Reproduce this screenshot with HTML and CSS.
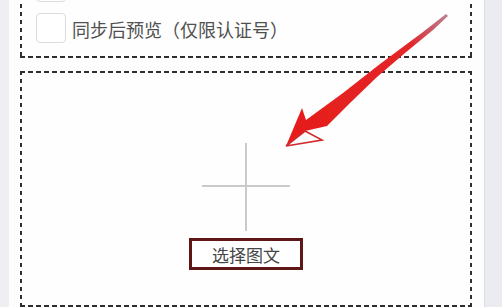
FILE: index.html
```html
<!DOCTYPE html>
<html lang="zh">
<head>
<meta charset="utf-8">
<link rel="stylesheet" href="styles.css">
</head>
<body>
<div class="page">
  <div class="card">
    <div class="box box-top">
      <div class="row"><span class="check"></span></div>
      <div class="row"><span class="check"></span><span class="label">同步后预览（仅限认证号）</span></div>
    </div>
    <div class="box box-main">
      <div class="plus"></div>
      <div class="pick">选择图文</div>
    </div>
  </div>
  <div class="side"></div>
</div>
<svg class="arrow" width="502" height="307" viewBox="0 0 502 307">
  <defs>
    <linearGradient id="shaft" x1="300" y1="130" x2="447" y2="15" gradientUnits="userSpaceOnUse">
      <stop offset="0" stop-color="#e61e1b"/>
      <stop offset="0.75" stop-color="#e3262a"/>
      <stop offset="1" stop-color="#a04a60" stop-opacity="0.7"/>
    </linearGradient>
    <filter id="soft" x="-10%" y="-10%" width="120%" height="120%">
      <feGaussianBlur stdDeviation="0.5"/>
    </filter>
  </defs>
  <g filter="url(#soft)">
    <polygon points="286,146 302,108 306,120 343,93 380,64 423,32 446,14 448,16 433,30 405,53 377,77 351,102 327,126 305,131" fill="url(#shaft)"/>
    <polygon points="286,146 305,131 322,140" fill="#fff" stroke="#d2292a" stroke-width="1.6" stroke-linejoin="miter"/>
  </g>
</svg>
</body>
</html>
```
FILE: styles.css
```css
html, body {
  margin: 0;
  padding: 0;
}
body {
  width: 502px;
  height: 307px;
  overflow: hidden;
  background: #eeeef3;
  font-family: "Noto Sans CJK SC", "Noto Sans", sans-serif;
  position: relative;
}
.page {
  display: flex;
  height: 307px;
  overflow: hidden;
}
.card {
  margin-left: 9px;
  width: 476px;
  background: #fdfdfd;
  border-right: 1px solid #dcdce2;
  padding: 0 12px 0 11px;
  box-sizing: border-box;
  display: flex;
  flex-direction: column;
  gap: 13px;
}
.side {
  flex: 1;
  background: #ebebf2;
}
.box {
  padding: 2px;
  background:
    repeating-linear-gradient(90deg, #2e2e2e 0 5px, transparent 5px 8px) left top / 100% 2px no-repeat,
    repeating-linear-gradient(90deg, #2e2e2e 0 5px, transparent 5px 8px) left bottom / 100% 2px no-repeat,
    repeating-linear-gradient(180deg, #2e2e2e 0 4px, transparent 4px 8px) left top / 2px 100% no-repeat,
    repeating-linear-gradient(180deg, #2e2e2e 0 4px, transparent 4px 8px) right top / 2px 100% no-repeat,
    #fefefe;
}
.box-top {
  margin-top: -44px;
  padding: 16px 16px 15px 16px;
  display: flex;
  flex-direction: column;
  gap: 11px;
}
.row {
  display: flex;
  align-items: center;
  gap: 6px;
  height: 30px;
}
.check {
  width: 30px;
  height: 30px;
  box-sizing: border-box;
  border: 1.5px solid #dcdcdc;
  border-radius: 4px;
  background: #fff;
}
.label {
  font-size: 18px;
  color: #505050;
  line-height: 30px;
  position: relative;
  top: 1px;
}
.box-main {
  flex: 1;
  min-height: 236px;
  display: flex;
  flex-direction: column;
  align-items: center;
  padding-top: 72px;
  box-sizing: border-box;
}
.plus {
  width: 88px;
  height: 88px;
  position: relative;
}
.plus::before, .plus::after {
  content: "";
  position: absolute;
  background: #cacaca;
}
.plus::before {
  left: 43px;
  top: 0;
  width: 2px;
  height: 88px;
}
.plus::after {
  left: 0;
  top: 42px;
  width: 88px;
  height: 2px;
}
.pick {
  margin-top: 7px;
  width: 114px;
  height: 32px;
  box-sizing: border-box;
  border: 3px solid #5e1616;
  display: flex;
  align-items: center;
  justify-content: center;
  font-size: 17px;
  color: #454545;
  background: #fff;
}
.arrow {
  position: absolute;
  left: 0;
  top: 0;
  pointer-events: none;
}
```
